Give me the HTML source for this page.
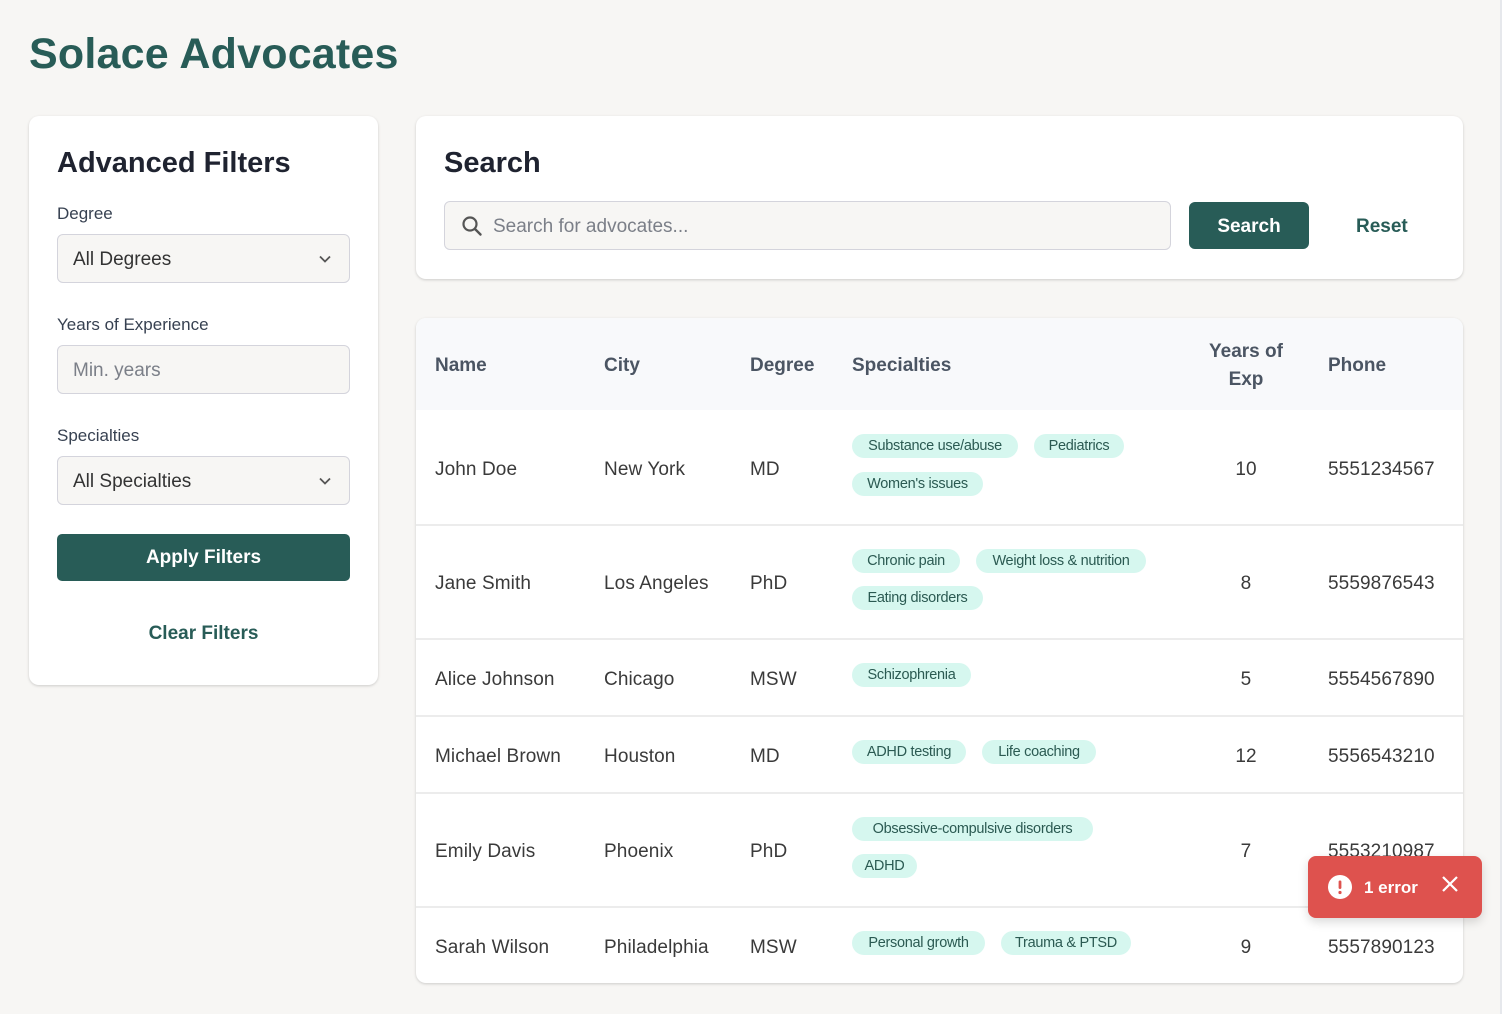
<!DOCTYPE html>
<html><head><meta charset="utf-8"><style>
*{box-sizing:border-box;margin:0;padding:0}
body{width:1502px;height:1014px;background:#f7f6f4;font-family:"Liberation Sans",sans-serif;position:relative;overflow:hidden;color:#374151}
.a{position:absolute}
.card{position:absolute;background:#fff;border-radius:10px;box-shadow:0 1px 3px rgba(0,0,0,.12),0 1px 2px rgba(0,0,0,.06)}
.lbl{position:absolute;left:57px;font-size:17px;color:#374151}
.inp{position:absolute;left:57px;width:293px;height:49px;background:#f7f6f4;border:1px solid #d4d4dc;border-radius:6px;font-size:19px;padding-left:15px;line-height:49px;color:#333}
.chev{position:absolute;right:17px;top:17px}
.td{position:absolute;font-size:19px;color:#3a3a3a;transform:translateY(-50%);margin-top:2px;letter-spacing:0.1px}
.th{position:absolute;font-size:19px;font-weight:bold;color:#4b5563;transform:translateY(-50%);margin-top:2px}
.pill{position:absolute;height:24px;line-height:24px;border-radius:12px;background:#d6f7ef;color:#2b5a52;font-size:14.5px;text-align:center;letter-spacing:-0.3px;white-space:nowrap}
.hr{position:absolute;left:416px;width:1047px;height:2px;background:#ececec}
</style></head><body>
<div class="a" style="right:0;top:0;width:2px;height:1014px;background:#e6e8ec"></div>
<div class="a" style="left:29px;top:30px;font-size:43px;font-weight:bold;color:#285c57;letter-spacing:0.2px">Solace Advocates</div>

<div class="card" style="left:29px;top:116px;width:349px;height:569px">
  <div class="a" style="left:28px;top:31px;font-size:29px;font-weight:bold;color:#1f2330">Advanced Filters</div>
</div>
<div class="lbl" style="top:204px">Degree</div>
<div class="inp" style="top:234px">All Degrees<svg class="chev" width="14" height="14" viewBox="0 0 14 14"><path d="M2 4.5l5 5 5-5" fill="none" stroke="#555" stroke-width="1.8"/></svg></div>
<div class="lbl" style="top:315px">Years of Experience</div>
<div class="inp" style="top:345px;color:#7b7f88">Min. years</div>
<div class="lbl" style="top:426px">Specialties</div>
<div class="inp" style="top:456px">All Specialties<svg class="chev" width="14" height="14" viewBox="0 0 14 14"><path d="M2 4.5l5 5 5-5" fill="none" stroke="#555" stroke-width="1.8"/></svg></div>
<div class="a" style="left:57px;top:534px;width:293px;height:47px;background:#285c57;border-radius:5px;color:#fff;font-size:19px;font-weight:bold;text-align:center;line-height:48px">Apply Filters</div>
<div class="a" style="left:57px;top:623px;width:293px;text-align:center;color:#285c57;font-size:19px;font-weight:bold">Clear Filters</div>

<div class="card" style="left:416px;top:116px;width:1047px;height:163px">
  <div class="a" style="left:28px;top:31px;font-size:29px;font-weight:bold;color:#1f2330">Search</div>
</div>
<div class="a" style="left:444px;top:201px;width:727px;height:49px;background:#f7f6f4;border:1px solid #d4d4dc;border-radius:6px">
  <svg class="a" style="left:16px;top:13px" width="22" height="22" viewBox="0 0 22 22"><circle cx="9" cy="9" r="6.5" fill="none" stroke="#555" stroke-width="2.2"/><path d="M14 14l5.5 5.5" stroke="#555" stroke-width="2.4" stroke-linecap="round"/></svg>
  <div class="a" style="left:48px;top:14px;font-size:19px;color:#7b7f88">Search for advocates...</div>
</div>
<div class="a" style="left:1189px;top:202px;width:120px;height:47px;background:#285c57;border-radius:6px;color:#fff;font-size:19px;font-weight:bold;text-align:center;line-height:49px">Search</div>
<div class="a" style="left:1356px;top:216px;color:#285c57;font-size:19px;font-weight:bold">Reset</div>

<div class="card" style="left:416px;top:318px;width:1047px;height:665px;overflow:hidden">
  <div class="a" style="left:0;top:0;width:1047px;height:92px;background:#f8f9fb"></div>
</div>
<div class="th" style="left:435px;top:364px">Name</div>
<div class="th" style="left:604px;top:364px">City</div>
<div class="th" style="left:750px;top:364px">Degree</div>
<div class="th" style="left:852px;top:364px">Specialties</div>
<div class="th" style="left:1196px;top:364px;width:100px;text-align:center;line-height:28px">Years of<br>Exp</div>
<div class="th" style="left:1328px;top:364px">Phone</div>

<div class="hr" style="top:524px"></div><div class="hr" style="top:638px"></div><div class="hr" style="top:715px"></div><div class="hr" style="top:792px"></div><div class="hr" style="top:906px"></div>

<div class="td" style="left:435px;top:468px">John Doe</div><div class="td" style="left:604px;top:468px">New York</div><div class="td" style="left:750px;top:468px">MD</div><div class="td" style="left:1196px;top:468px;width:100px;text-align:center">10</div><div class="td" style="left:1328px;top:468px">5551234567</div>
<div class="pill" style="left:852px;top:434px;width:166px">Substance use/abuse</div><div class="pill" style="left:1034px;top:434px;width:90px">Pediatrics</div><div class="pill" style="left:852px;top:472px;width:131px">Women's issues</div>

<div class="td" style="left:435px;top:582px">Jane Smith</div><div class="td" style="left:604px;top:582px">Los Angeles</div><div class="td" style="left:750px;top:582px">PhD</div><div class="td" style="left:1196px;top:582px;width:100px;text-align:center">8</div><div class="td" style="left:1328px;top:582px">5559876543</div>
<div class="pill" style="left:852px;top:549px;width:108px">Chronic pain</div><div class="pill" style="left:976px;top:549px;width:170px">Weight loss &amp; nutrition</div><div class="pill" style="left:852px;top:586px;width:131px">Eating disorders</div>

<div class="td" style="left:435px;top:678px">Alice Johnson</div><div class="td" style="left:604px;top:678px">Chicago</div><div class="td" style="left:750px;top:678px">MSW</div><div class="td" style="left:1196px;top:678px;width:100px;text-align:center">5</div><div class="td" style="left:1328px;top:678px">5554567890</div>
<div class="pill" style="left:852px;top:663px;width:119px">Schizophrenia</div>

<div class="td" style="left:435px;top:755px">Michael Brown</div><div class="td" style="left:604px;top:755px">Houston</div><div class="td" style="left:750px;top:755px">MD</div><div class="td" style="left:1196px;top:755px;width:100px;text-align:center">12</div><div class="td" style="left:1328px;top:755px">5556543210</div>
<div class="pill" style="left:852px;top:740px;width:114px">ADHD testing</div><div class="pill" style="left:982px;top:740px;width:114px">Life coaching</div>

<div class="td" style="left:435px;top:850px">Emily Davis</div><div class="td" style="left:604px;top:850px">Phoenix</div><div class="td" style="left:750px;top:850px">PhD</div><div class="td" style="left:1196px;top:850px;width:100px;text-align:center">7</div><div class="td" style="left:1328px;top:850px">5553210987</div>
<div class="pill" style="left:852px;top:817px;width:241px">Obsessive-compulsive disorders</div><div class="pill" style="left:852px;top:854px;width:65px">ADHD</div>

<div class="td" style="left:435px;top:946px">Sarah Wilson</div><div class="td" style="left:604px;top:946px">Philadelphia</div><div class="td" style="left:750px;top:946px">MSW</div><div class="td" style="left:1196px;top:946px;width:100px;text-align:center">9</div><div class="td" style="left:1328px;top:946px">5557890123</div>
<div class="pill" style="left:852px;top:931px;width:133px">Personal growth</div><div class="pill" style="left:1001px;top:931px;width:130px">Trauma &amp; PTSD</div>

<div class="a" style="left:1308px;top:856px;width:174px;height:62px;background:#de524e;border-radius:8px;box-shadow:0 4px 10px rgba(0,0,0,.15)">
  <svg class="a" style="left:20px;top:19px" width="24" height="24" viewBox="0 0 24 24"><circle cx="12" cy="12" r="12" fill="#fff"/><rect x="10.6" y="5.5" width="2.8" height="8.5" rx="1.2" fill="#de524e"/><circle cx="12" cy="17.5" r="1.6" fill="#de524e"/></svg>
  <div class="a" style="left:56px;top:22px;color:#fff;font-size:17px;font-weight:bold">1 error</div>
  <svg class="a" style="left:133px;top:19px" width="18" height="18" viewBox="0 0 18 18"><path d="M2 2l14 14M16 2L2 16" stroke="#fff" stroke-width="2.2"/></svg>
</div>
</body></html>
